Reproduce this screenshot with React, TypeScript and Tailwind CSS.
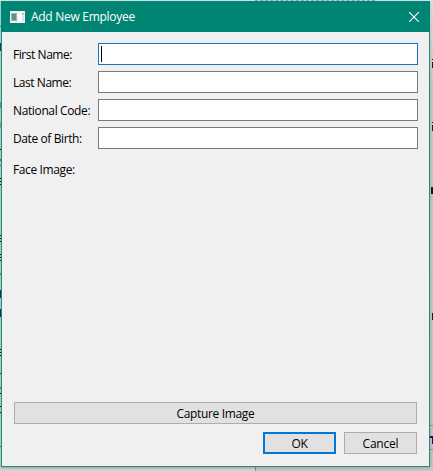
const fields = [
  { label: 'First Name:', tracking: 'tracking-[-0.45px]', focused: true },
  { label: 'Last Name:', tracking: 'tracking-[-0.45px]', focused: false },
  { label: 'National Code:', tracking: 'tracking-[-0.37px]', focused: false },
  { label: 'Date of Birth:', tracking: 'tracking-[-0.4px]', focused: false },
];

// Parts of the text in the windows behind that stay visible at the edges.
const leftMarks = [
  'top-[26px] h-px bg-[#4b8a87]',
  'top-[43px] h-[8px] bg-[#064d86]',
  'top-[102px] h-[6px] bg-[#5ca49b]',
  'top-[122px] h-[6px] bg-[#a4ac72]',
  'top-[149px] h-px bg-[#111]',
  'top-[159px] h-[2px] bg-[#4c7f83]',
  'top-[165px] h-px bg-[#4c7f83]',
  'top-[178px] h-px bg-[#111]',
  'top-[181px] h-px bg-[#111]',
  'top-[184px] h-px bg-[#111]',
  'top-[235px] h-px bg-[#111]',
  'top-[238px] h-px bg-[#111]',
  'top-[241px] h-px bg-[#111]',
  'top-[254px] h-px bg-[#111]',
  'top-[257px] h-px bg-[#111]',
  'top-[260px] h-px bg-[#111]',
  'top-[273px] h-[2px] bg-[#4c9a8f]',
  'top-[290px] h-[8px] bg-[#063f5b]',
  'top-[309px] h-[8px] bg-[#063f5b]',
  'top-[349px] h-px bg-[#111]',
  'top-[352px] h-px bg-[#111]',
  'top-[355px] h-px bg-[#111]',
  'top-[373px] h-px bg-[#26463f]',
  'top-[387px] h-[2px] bg-[#4c9a8f]',
  'top-[393px] h-px bg-[#111]',
  'top-[406px] h-px bg-[#111]',
  'top-[412px] h-px bg-[#111]',
  'top-[446px] h-px bg-[#397f76]',
];

const rightMarks = [
  'top-[59px] h-px w-[1px] bg-[#3c0a30]',
  'top-[62px] h-[6px] w-[1px] bg-[#3c0a30]',
  'top-[122px] h-px w-[1px] bg-[#3c0a30]',
  'top-[125px] h-[6px] w-[1px] bg-[#3c0a30]',
  'top-[187px] h-[7px] w-[2px] bg-[#14182f]',
  'top-[313px] h-[7px] w-[1px] bg-[#14182f]',
  'top-[436px] h-[2px] w-[3px] bg-[#3b0060]',
  'top-[438px] h-[6px] w-[1px] bg-[#3b0060]',
];

function Backdrop() {
  return (
    <div className="absolute inset-0">
      <div className="absolute inset-y-0 left-0 w-[2px] bg-[#a2e3d9]" />
      {leftMarks.map((m) => (
        <div key={m} className={`absolute left-0 w-px ${m}`} />
      ))}
      <div className="absolute top-0 left-0 h-px w-full bg-[#d3e9e6]" />
      <div className="absolute top-0 left-[255px] h-px w-[120px] border-t border-dashed border-[#8fa9a5]" />
      <div className="absolute top-[4px] right-0 h-[463px] w-[3px] bg-linear-to-b from-[#dedede] via-[#c6c6c9] via-20% to-[#c3c3c7]" />
      <div className="absolute top-[425px] right-0 h-[25px] w-[3px] border-y border-[#909095]" />
      {rightMarks.map((m) => (
        <div key={m} className={`absolute right-0 ${m}`} />
      ))}
      <div className="absolute bottom-0 left-0 flex h-[4px] w-full">
        <div className="w-[256px] border-r border-[#8b8b8b] bg-linear-to-b from-[#c2c9c6] to-[#dbdbdb]" />
        <div className="flex-1 bg-[#c6c6c6]" />
      </div>
    </div>
  );
}

function TitleBar() {
  return (
    <header className="flex h-[31px] shrink-0 items-center bg-[#008574] pr-[11px] pl-[9px] text-white">
      <svg width="15" height="12" viewBox="0 0 15 12" shapeRendering="crispEdges">
        <rect width="15" height="12" fill="#eef1f1" />
        <rect x="1" y="2" width="6" height="8" fill="#a5b5b4" />
        <rect x="2" y="3" width="4" height="6" fill="#5c9388" />
        <rect x="8" y="2" width="4" height="8" fill="#fbfbfb" />
        <rect x="12" y="2" width="2" height="2" fill="#b2bdbc" />
        <rect x="12" y="5" width="2" height="5" fill="#dce0e0" />
      </svg>
      <h1 className="ml-[6px] flex-1 text-[12px] leading-4 tracking-[-0.28px] whitespace-nowrap">
        Add New Employee
      </h1>
      <svg width="10" height="10" viewBox="0 0 10 10" stroke="white" strokeWidth="1.1">
        <path d="M0 0L10 10M10 0L0 10" />
      </svg>
    </header>
  );
}

export default function App() {
  return (
    <div className="relative h-[471px] w-[433px] overflow-hidden bg-[#dcdcdc] font-['Open_Sans','Noto_Sans',sans-serif] text-[12px] text-black">
      <Backdrop />
      <main className="absolute top-px left-px flex h-[466px] w-[429px] flex-col border border-t-0 border-[#258c73] bg-[#f0f0f0] shadow-[0_1px_3px_#0003]">
        <div className="-mx-px flex flex-col">
          <TitleBar />
        </div>
        <form className="flex flex-1 flex-col px-[12px] pt-[11px] pb-[12px]">
          <div className="-mr-px flex flex-col gap-[6px]">
            {fields.map((f) => (
              <label key={f.label} className="flex h-[22px] items-center">
                <span className={`-ml-px w-[85px] shrink-0 pt-[2px] whitespace-nowrap ${f.tracking}`}>
                  {f.label}
                </span>
                <span
                  className={`flex h-full flex-1 items-center border bg-white pl-[2px] ${
                    f.focused ? 'border-[#1d74b8]' : 'border-[#7a7a7a]'
                  }`}
                >
                  {f.focused && <span className="h-[16px] w-px bg-black" />}
                </span>
              </label>
            ))}
          </div>
          <div className="mt-[12px] -ml-px flex-1 leading-[18px] tracking-[-0.38px]">Face Image:</div>
          <button
            type="button"
            className="flex h-[22px] shrink-0 items-center justify-center border border-[#adadad] bg-[#e1e1e1] pt-[2px] tracking-[-0.35px]"
          >
            Capture Image
          </button>
          <div className="mt-[8px] flex justify-end gap-[8px]">
            <button
              type="button"
              className="flex h-[22px] w-[73px] items-center justify-center border-2 border-[#0078d7] bg-[#e1e1e1] pt-[2px] tracking-[-0.3px]"
            >
              OK
            </button>
            <button
              type="button"
              className="flex h-[22px] w-[73px] items-center justify-center border border-[#adadad] bg-[#e1e1e1] pt-[2px] tracking-[-0.2px]"
            >
              Cancel
            </button>
          </div>
        </form>
      </main>
    </div>
  );
}
